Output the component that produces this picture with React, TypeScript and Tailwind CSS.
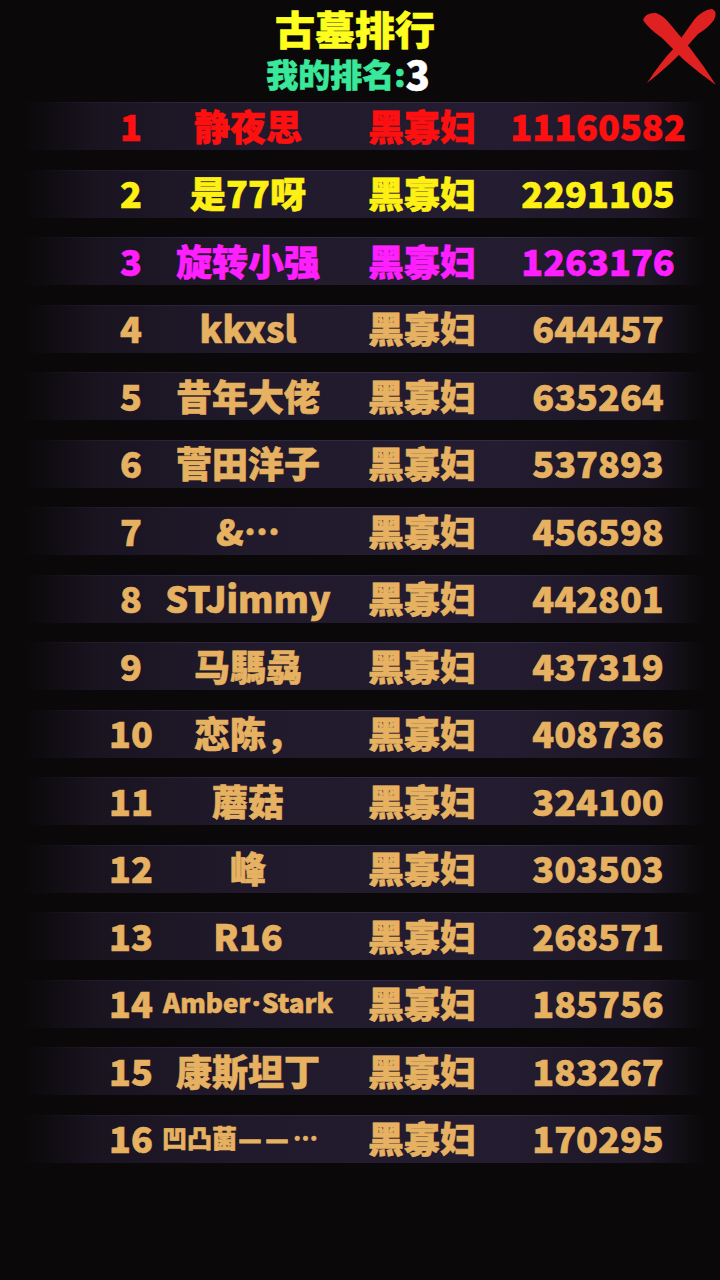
import React from "react";

type Row = { rank: number; name: React.ReactNode; cls: string; score: string; color: string; nameSize?: string; nameShift?: string };

const gold = "text-[#e6b261]";

const rows: Row[] = [
  { rank: 1, name: "静夜思", cls: "黑寡妇", score: "11160582", color: "text-[#ff1010]" },
  { rank: 2, name: "是77呀", cls: "黑寡妇", score: "2291105", color: "text-[#fff014]" },
  { rank: 3, name: "旋转小强", cls: "黑寡妇", score: "1263176", color: "text-[#ff1fff]" },
  { rank: 4, name: "kkxsl", cls: "黑寡妇", score: "644457", color: gold },
  { rank: 5, name: "昔年大佬", cls: "黑寡妇", score: "635264", color: gold },
  { rank: 6, name: "菅田洋子", cls: "黑寡妇", score: "537893", color: gold },
  { rank: 7, name: "&…", cls: "黑寡妇", score: "456598", color: gold },
  { rank: 8, name: "STJimmy", cls: "黑寡妇", score: "442801", color: gold },
  { rank: 9, name: "马騳骉", cls: "黑寡妇", score: "437319", color: gold },
  { rank: 10, name: "恋陈，", cls: "黑寡妇", score: "408736", color: gold },
  { rank: 11, name: "蘑菇", cls: "黑寡妇", score: "324100", color: gold },
  { rank: 12, name: "峰", cls: "黑寡妇", score: "303503", color: gold },
  { rank: 13, name: "R16", cls: "黑寡妇", score: "268571", color: gold },
  {
    rank: 14,
    name: (
      <>
        Amber<span className="px-[2px]" style={{ fontFamily: '"Noto Sans", sans-serif' }}>·</span>Stark
      </>
    ),
    cls: "黑寡妇",
    score: "185756",
    color: gold,
    nameSize: "text-[26px]",
  },
  {
    rank: 15,
    name: "康斯坦丁",
    cls: "黑寡妇",
    score: "183267",
    color: gold,
  },
  {
    rank: 16,
    name: (
      <>
        凹凸菌
        <span
          className="ml-[2px] text-[22px] tracking-[5px] [-webkit-text-stroke-width:1.2px]"
          style={{ fontFamily: '"Noto Sans", sans-serif' }}
        >
          ——
        </span>
        …
      </>
    ),
    cls: "黑寡妇",
    score: "170295",
    color: gold,
    nameSize: "text-[25px]",
    nameShift: "mr-[16px]",
  },
];

function CloseX() {
  return (
    <svg viewBox="0 0 80 80" className="absolute left-[640px] top-[8px] w-[80px] h-[80px]">
      <path
        d="M7,75 Q20,55 34,40 L54,12 Q62,2 72,1 Q78,3 74,12 Q68,20 58,26 L42,44 Q24,62 7,75 Z"
        fill="#e02121"
      />
      <path
        d="M3,12 Q6,4 16,5 Q24,8 30,16 L50,40 Q64,58 76,77 Q60,66 44,52 L22,30 Q8,20 3,12 Z"
        fill="#e02121"
      />
    </svg>
  );
}

export default function App() {
  return (
    <div
      className="relative w-[720px] h-[1280px] bg-[#0a0809] overflow-hidden font-black [-webkit-text-stroke-width:0.6px]"
      style={{ fontFamily: '"Noto Sans CJK SC", "Noto Sans", sans-serif' }}
    >
      <CloseX />
      <div className="h-[102px] flex flex-col items-center pt-[6px]">
        <div className="text-[40px] leading-[44px] text-[#ffff1f] mr-[10px]">古墓排行</div>
        <div className="mt-[4px] h-[38px] flex items-center mr-[24px]">
          <span className="text-[32px] leading-none text-[#3ae89b]">我的排名:</span>
          <span className="text-[40px] leading-none text-white">3</span>
        </div>
      </div>
      <div className="flex flex-col gap-[19.5px]">
        {rows.map((r) => (
          <div
            key={r.rank}
            className="h-[48px] flex flex-col bg-[linear-gradient(to_right,rgba(20,16,26,0)_3%,#1a1421_14%,#211a2c_35%,#241c30_70%,#1d1726_90%,rgba(20,16,26,0)_98%)]"
          >
            <div className="h-px bg-[linear-gradient(to_right,rgba(60,50,75,0)_5%,#2f2740_30%,#342b45_70%,rgba(60,50,75,0)_97%)]" />
            <div className="flex-1 flex items-center pb-[4px]">
              <div className={`ml-[90px] w-[82px] flex justify-center whitespace-nowrap text-[36px] leading-none ${r.color}`}>
                {r.rank}
              </div>
              <div className={`w-[152px] flex justify-center items-center whitespace-nowrap leading-none ${r.nameSize ?? "text-[36px]"} ${r.color}`}>
                <span className={r.nameShift ?? ""}>{r.name}</span>
              </div>
              <div className={`w-[196px] flex justify-center whitespace-nowrap text-[36px] leading-none ${r.color}`}>
                {r.cls}
              </div>
              <div className={`w-[156px] flex justify-center whitespace-nowrap text-[36px] leading-none ${r.color}`}>
                {r.score}
              </div>
            </div>
          </div>
        ))}
      </div>
    </div>
  );
}
